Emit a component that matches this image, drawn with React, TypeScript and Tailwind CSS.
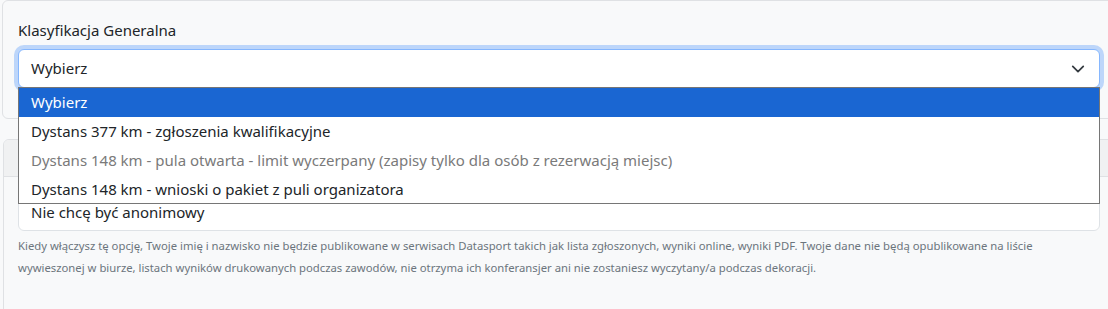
import React from "react";

export default function App() {
  const font = { fontFamily: '"Segoe UI", "Noto Sans", "Open Sans", sans-serif' };
  return (
    <div className="w-[1108px] h-[309px] overflow-hidden bg-[#f8f9fa] text-[#212529] relative" style={font}>
      <div className="flex flex-col gap-[20px] pl-[2px]">
        {/* Card 1 */}
        <div className="w-[1120px] h-[119px] border border-[#dfe1e4] rounded-[6px] bg-[#f8f9fa] px-[15px] pt-[17px]">
          <div className="text-[15px] leading-[24px] mb-[7px]">Klasyfikacja Generalna</div>
          <div className="relative w-[1082px]">
            <div className="h-[39px] w-[1082px] rounded-[6px] border border-[#86b7fe] bg-white shadow-[0_0_0_4px_rgba(13,110,253,0.25)] flex items-center justify-between pl-[12px] pr-[14px]">
              <span className="text-[15px]">Wybierz</span>
              <svg width="14" height="14" viewBox="0 0 16 16" fill="none" stroke="#343a40" strokeWidth="2" strokeLinecap="round" strokeLinejoin="round">
                <path d="m2 5 6 6 6-6" />
              </svg>
            </div>
          </div>
        </div>
        {/* Card 2 */}
        <div className="w-[1120px] h-[220px] ml-[1px] border border-[#dfe1e4] rounded-[6px] bg-[#f8f9fa] overflow-hidden">
          <div className="h-[37px] bg-[#f0f1f2] border-b border-[#dfe1e4]"></div>
          <div className="px-[14px] pt-[17px]">
            <div className="h-[37px] w-[1082px] rounded-[6px] border border-[#dee2e6] bg-white flex items-center pl-[12px] text-[15px]">
              Nie chcę być anonimowy
            </div>
            <div className="mt-[4px] w-[1082px] text-[11.3px] leading-[22px] text-[#6c757d]">
              Kiedy włączysz tę opcję, Twoje imię i nazwisko nie będzie publikowane w serwisach Datasport takich jak lista zgłoszonych, wyniki online, wyniki PDF. Twoje dane nie będą opublikowane na liście
              <br />
              wywieszonej w biurze, listach wyników drukowanych podczas zawodów, nie otrzyma ich konferansjer ani nie zostaniesz wyczytany/a podczas dekoracji.
            </div>
          </div>
        </div>
      </div>
      {/* Open dropdown list */}
      <div className="absolute left-[18px] top-[87px] w-[1082px] bg-white border border-[#767676] text-[15px]">
        <div className="h-[29px] flex items-center pl-[12px] bg-[#1a66d2] text-white">Wybierz</div>
        <div className="h-[29px] flex items-center pl-[12px] text-[#212529]">Dystans 377 km - zgłoszenia kwalifikacyjne</div>
        <div className="h-[29px] flex items-center pl-[12px] text-[#7a7a7a]">Dystans 148 km - pula otwarta - limit wyczerpany (zapisy tylko dla osób z rezerwacją miejsc)</div>
        <div className="h-[28px] flex items-center pl-[12px] text-[#212529]">Dystans 148 km - wnioski o pakiet z puli organizatora</div>
      </div>
    </div>
  );
}
